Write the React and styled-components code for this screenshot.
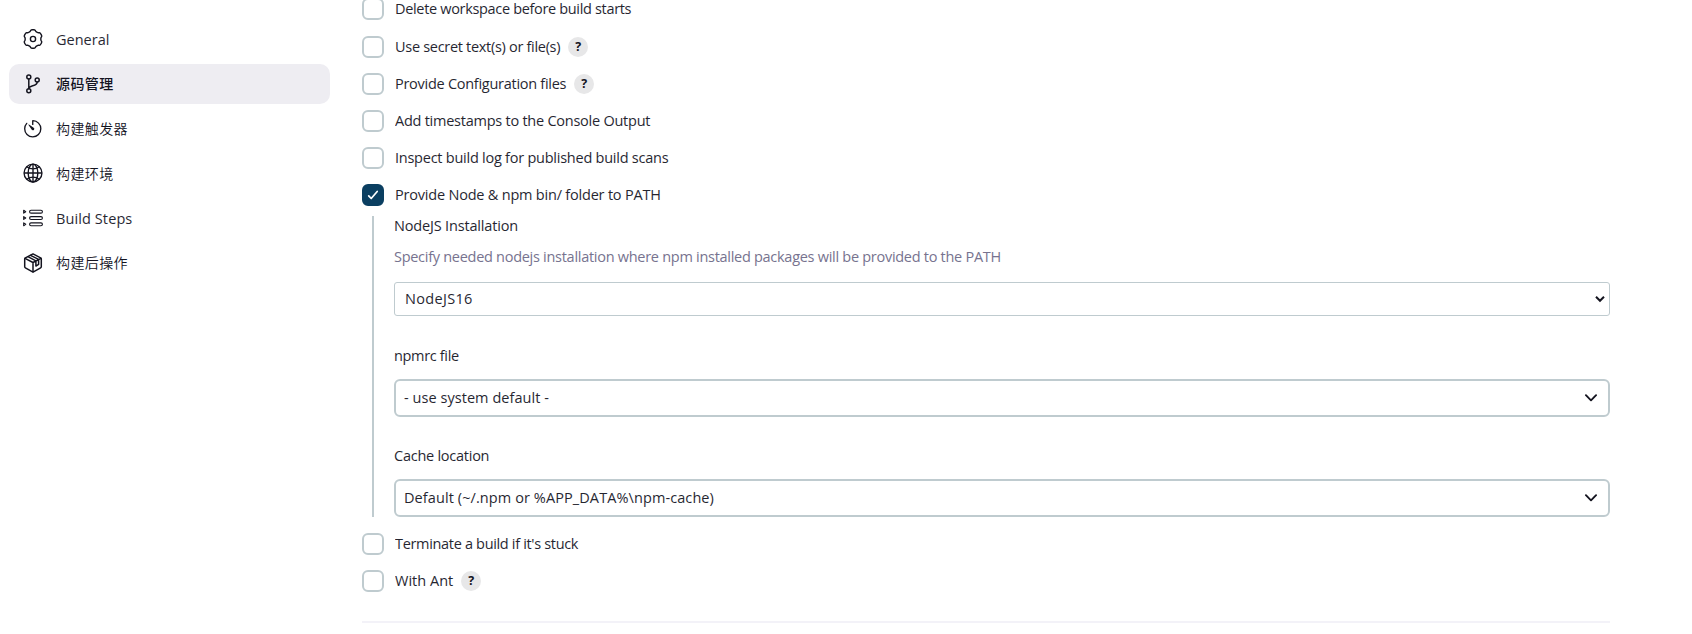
import React from 'react';
import styled, { createGlobalStyle, css } from 'styled-components';
import { IoTimerOutline, IoGlobeOutline } from 'react-icons/io5';

const INK = '#14141f';
const LINE = '#bfcbcf';

const GlobalStyle = createGlobalStyle`
  * { box-sizing: border-box; }
  body {
    margin: 0;
    background: #fff;
    color: ${INK};
    font: 370 14.5px/22px "Open Sans", "Noto Sans CJK SC", sans-serif;
    overflow: hidden;
  }
`;

const Page = styled.div`
  display: flex;
  height: 634px;
  overflow: hidden;
`;

const Sidebar = styled.nav`
  width: 362px;
  flex: none;
  padding: 19px 32px 0 9px;
  display: flex;
  flex-direction: column;
  gap: 4.8px;
`;

const NavItem = styled.a`
  display: flex;
  align-items: center;
  gap: 13px;
  height: 40px;
  padding-left: 14px;
  border-radius: 10px;
  color: ${INK};
  background: ${(p) => (p.$active ? '#eeedf2' : 'transparent')};
`;

const IconSlot = styled.span`
  width: 20px;
  height: 20px;
  flex: none;
  display: flex;
  align-items: center;
  justify-content: center;
  svg { flex: none; display: block; }
`;

const NavLabel = styled.span`
  ${(p) =>
    p.$cjk
      ? css`
          font-family: "Noto Sans CJK SC", sans-serif;
          font-size: 14px;
          font-weight: ${p.$active ? 500 : 350};
          letter-spacing: 0.4px;
          padding-bottom: 1px;
        `
      : css`
          letter-spacing: ${p.$track || 0}px;
          padding-top: 1px;
          opacity: 0.92;
        `}
`;

const Main = styled.main`
  width: 1248px;
  flex: none;
  display: flex;
  flex-direction: column;
  margin-top: -2px;
`;

const OptionRow = styled.label`
  display: flex;
  align-items: center;
  height: 22px;
  flex: none;
  margin-bottom: ${(p) => p.$after ?? 15}px;
`;

const Box = styled.span`
  width: 22px;
  height: 22px;
  flex: none;
  display: grid;
  place-items: center;
  border-radius: 6px;
  margin-right: 11px;
  background: ${(p) => (p.$checked ? '#0b3f61' : '#fff')};
  border: 2px solid ${(p) => (p.$checked ? '#0b3f61' : LINE)};
`;

const Text = styled.span`
  white-space: pre;
  opacity: 0.93;
  letter-spacing: ${(p) => p.$track || 0}px;
`;

const Help = styled.span`
  width: 20px;
  height: 20px;
  margin-left: 8px;
  border-radius: 50%;
  background: #e7e7e8;
  display: grid;
  place-items: center;
  font-size: 12.5px;
  line-height: 20px;
  font-weight: 700;
`;

const Nested = styled.section`
  margin: 0 0 16px 10px;
  padding-left: 20px;
  border-left: 2px solid ${LINE};
  height: 301px;
  flex: none;
  display: flex;
  flex-direction: column;
`;

const FieldLabel = styled.div`
  height: ${(p) => p.$height || 22}px;
  line-height: ${(p) => p.$height || 22}px;
  margin: ${(p) => p.$before || 0}px 0 ${(p) => p.$after}px;
`;

const Description = styled.div`
  height: 22px;
  margin-bottom: 14px;
  color: #6d6987;
`;

const Select = styled.div`
  display: flex;
  align-items: center;
  justify-content: space-between;
  background: #fff;
  flex: none;
  svg { display: block; flex: none; }
  ${(p) =>
    p.$native
      ? css`
          height: 34px;
          border: 1px solid ${LINE};
          border-radius: 3px;
          padding: 0 4px 0 10px;
        `
      : css`
          height: 38px;
          border: 2px solid ${LINE};
          border-radius: 6px;
          padding: 0 10px 1px 8px;
        `}
`;

const Divider = styled.hr`
  width: 100%;
  height: 2px;
  margin: 14px 0 0;
  border: 0;
  background: #f3f2f8;
`;

const stroke = { fill: 'none', stroke: 'currentColor', strokeLinecap: 'round', strokeLinejoin: 'round' };

// Six soft lobes around a ring, one of them pointing straight up.
const GEAR_POINTS = Array.from({ length: 96 }, (_, i) => {
  const a = (i / 96) * Math.PI * 2;
  const r = 8.55 + 0.75 * Math.tanh(2.2 * Math.cos(6 * a) + 0.5);
  return `${(10 + r * Math.sin(a)).toFixed(2)},${(10 - r * Math.cos(a)).toFixed(2)}`;
}).join(' ');

const GearIcon = () => (
  <svg width="20" height="20" viewBox="0 0 20 20" {...stroke} strokeWidth="1.4">
    <polygon points={GEAR_POINTS} />
    <circle cx="10" cy="10" r="2.6" />
  </svg>
);

const BranchIcon = () => (
  <svg width="20" height="20" viewBox="0 0 20 20" {...stroke} strokeWidth="1.5">
    <circle cx="5.8" cy="3" r="2" />
    <circle cx="5.8" cy="16.8" r="2" />
    <circle cx="14.2" cy="6" r="2" />
    <path d="M5.8 5v9.8M14.2 8c0 4.8-8.2 2.6-8.4 6.6" />
  </svg>
);

const StepsIcon = () => (
  <svg width="20" height="20" viewBox="0 0 20 20" {...stroke} strokeWidth="1.15">
    {[3.7, 10, 16.3].map((y) => (
      <g key={y}>
        <path d={`M.7 ${y - 1.4}L2.7 ${y}L.7 ${y + 1.4}Z`} />
        <rect x="6.6" y={y - 1.45} width="12.8" height="2.9" rx="1.45" />
      </g>
    ))}
  </svg>
);

const PackageIcon = () => (
  <svg width="20" height="20" viewBox="0 0 20 20" {...stroke} strokeWidth="1.5">
    <path d="M10 .9l7.6 4a1.3 1.3 0 0 1 .7 1.1v7.8a1.3 1.3 0 0 1-.7 1.1L10 19.1l-7.6-4.2a1.3 1.3 0 0 1-.7-1.1V6a1.3 1.3 0 0 1 .7-1.1z" />
    <path d="M2 5.4l8 4.1 8-4.1M10 9.5v9.3M4.9 3.7l8 4.1v5.3l2.7-1.7V6.4L7.5 2.3" />
  </svg>
);

const Check = () => (
  <svg width="12" height="12" viewBox="0 0 12 12" {...stroke} stroke="#fff" strokeWidth="1.7">
    <path d="M1.7 6.8l2.5 2.7 6-7" />
  </svg>
);

const Chevron = ({ small }) =>
  small ? (
    <svg width="10" height="8" viewBox="0 0 10 8" {...stroke} strokeWidth="2" strokeLinecap="butt" strokeLinejoin="miter">
      <path d="M1 1.8l4 4 4-4" />
    </svg>
  ) : (
    <svg width="14" height="10" viewBox="0 0 14 10" {...stroke} strokeWidth="1.9">
      <path d="M1.9 2.2L7 7.3l5.1-5.1" />
    </svg>
  );

const Option = ({ track, checked, help, after, children }) => (
  <OptionRow $after={after}>
    <Box $checked={checked}>{checked && <Check />}</Box>
    <Text $track={track}>{children}</Text>
    {help && <Help>?</Help>}
  </OptionRow>
);

const NAV = [
  { label: 'General', icon: <GearIcon />, track: 0 },
  { label: '源码管理', icon: <BranchIcon />, cjk: true, active: true },
  { label: '构建触发器', icon: <IoTimerOutline size={21.5} />, cjk: true },
  { label: '构建环境', icon: <IoGlobeOutline size={22} />, cjk: true },
  { label: 'Build Steps', icon: <StepsIcon />, track: 0.1 },
  { label: '构建后操作', icon: <PackageIcon />, cjk: true },
];

export default function App() {
  return (
    <>
      <GlobalStyle />
      <Page>
        <Sidebar>
          {NAV.map((n) => (
            <NavItem key={n.label} $active={n.active}>
              <IconSlot>{n.icon}</IconSlot>
              <NavLabel $cjk={n.cjk} $active={n.active} $track={n.track}>{n.label}</NavLabel>
            </NavItem>
          ))}
        </Sidebar>
        <Main>
          <Option track={-0.33} after={16}>Delete workspace before build starts</Option>
          <Option track={-0.3} help>Use secret text(s) or file(s)</Option>
          <Option track={-0.27} help>Provide Configuration files</Option>
          <Option track={-0.245}>Add timestamps to the Console Output</Option>
          <Option track={-0.243}>Inspect build log for published build scans</Option>
          <Option track={-0.205} checked after={10}>{'Provide Node & npm bin/ folder to PATH'}</Option>
          <Nested>
            <FieldLabel $height={20} $after={10}><Text $track={-0.167}>NodeJS Installation</Text></FieldLabel>
            <Description>
              <Text $track={-0.28}>Specify needed nodejs installation where npm installed packages will be provided to the PATH</Text>
            </Description>
            <Select $native>
              <Text $track={0.33}>NodeJS16</Text>
              <Chevron small />
            </Select>
            <FieldLabel $before={29} $after={12}><Text $track={-0.34}>npmrc file</Text></FieldLabel>
            <Select>
              <Text $track={0.05}>- use system default -</Text>
              <Chevron />
            </Select>
            <FieldLabel $before={28} $after={12}><Text $track={-0.25}>Cache location</Text></FieldLabel>
            <Select>
              <Text $track={0.09}>{'Default (~/.npm or %APP_DATA%\\npm-cache)'}</Text>
              <Chevron />
            </Select>
          </Nested>
          <Option track={-0.325}>{"Terminate a build if it's stuck"}</Option>
          <Option track={0.02} help>With Ant</Option>
          <Divider />
        </Main>
      </Page>
    </>
  );
}
